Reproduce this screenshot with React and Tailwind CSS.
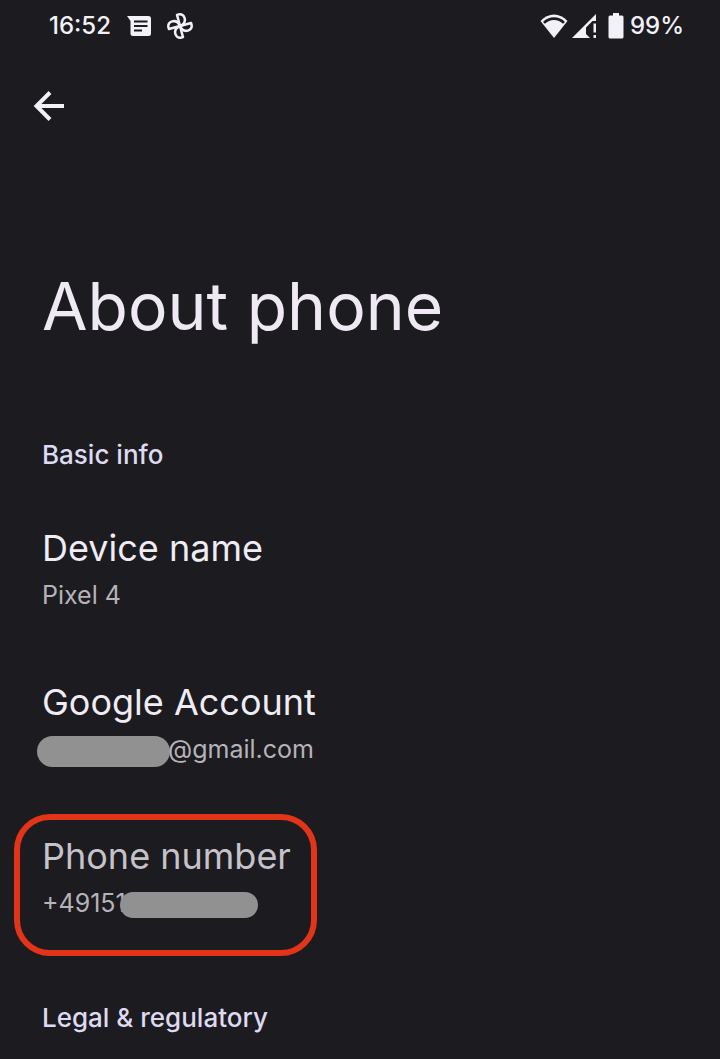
import React from "react";

function MessageIcon() {
  return (
    <svg width="24" height="20" viewBox="0 0 24 20" aria-hidden="true">
      <path d="M0 0H21.500Q24 0 24 2.500V17.500Q24 20 21.500 20H6Q3.500 20 3.500 17.500V5Z" fill="#f3f1f8" />
      <path d="M7 5.500H20.500M7 10H20.500M7 14.500H15" stroke="#1c1b20" strokeWidth="2" />
    </svg>
  );
}

function PinwheelIcon() {
  const blade = "M13 13V1.500H14.500C18 1.500 19.500 4 19.500 6.500C19.500 10 17 12.500 13 13Z";
  return (
    <svg width="26" height="26" viewBox="0 0 26 26" fill="none" aria-hidden="true">
      <g stroke="#f3f1f8" strokeWidth="2.500" strokeLinejoin="round">
        {[-15, 75, 165, 255].map((angle) => (
          <path key={angle} d={blade} transform={`rotate(${angle} 13 13)`} />
        ))}
      </g>
    </svg>
  );
}

function WifiIcon() {
  return (
    <svg width="28" height="24" viewBox="0 0 28 24" aria-hidden="true">
      <path d="M0.500 7C8-1.800 20-1.800 27.500 7L14 24Z" fill="#f3f1f8" />
      <path d="M4 8.800C9.500 3.200 18.500 3.200 24 8.800" stroke="#1c1b20" strokeWidth="2.600" fill="none" />
    </svg>
  );
}

function SignalIcon() {
  return (
    <svg width="24" height="24" viewBox="0 0 24 24" aria-hidden="true">
      <path d="M0 24L24 0V7H20.500L14 13.500V20L18 24Z" fill="#f3f1f8" />
      <path d="M21.500 9.500H24V18.500H21.500ZM21.500 21H24V24H21.500Z" fill="#f3f1f8" />
    </svg>
  );
}

function BatteryIcon() {
  return (
    <svg width="16" height="26" viewBox="0 0 16 26" aria-hidden="true">
      <path d="M5 0H11V2.500H14Q15.500 2.500 15.500 4V24Q15.500 25.500 14 25.500H2Q0.500 25.500 0.500 24V4Q0.500 2.500 2 2.500H5Z" fill="#f3f1f8" />
    </svg>
  );
}

function StatusBar() {
  return (
    <div className="flex h-[52px] items-center justify-between pl-[49px] pr-9 text-2xl font-medium text-[#f3f1f8]">
      <div className="flex items-center gap-4">
        <span>16:52</span>
        <MessageIcon />
        <PinwheelIcon />
      </div>
      <div className="flex items-center">
        <div className="mr-3 flex gap-1">
          <WifiIcon />
          <SignalIcon />
        </div>
        <BatteryIcon />
        <span className="ml-1.5">99%</span>
      </div>
    </div>
  );
}

function SectionTitle({ children }) {
  return <h2 className="text-[26px] font-medium leading-10 text-[#dedaf0]">{children}</h2>;
}

function InfoRow({ title, children, highlighted = false }) {
  return (
    <li className="pb-[27px] pt-[31px]">
      <div className="relative w-fit">
        <h3 className={highlighted ? "text-4xl/12 text-[#c5c2ca]" : "text-4xl/12 text-[#efecf4]"}>
          {title}
        </h3>
        <p className="flex h-12 items-center text-[25px] text-[#b5b3b9]">{children}</p>
        {highlighted && (
          <div className="absolute -bottom-7 -left-7 -right-[26px] -top-[18px] rounded-[36px] border-6 border-[#e23418]" />
        )}
      </div>
    </li>
  );
}

export default function App() {
  return (
    <div className="min-h-screen bg-[#1c1b20] font-['Inter',sans-serif]">
      <StatusBar />
      <header className="pt-[30px]">
        <button type="button" aria-label="Back" className="ml-[25px] flex size-12 items-center justify-center">
          <svg width="32" height="30" viewBox="0 0 32 30" fill="none" stroke="#f3f1f8" strokeWidth="4" aria-hidden="true">
            <path d="M31 15H4M17 1.500L3.500 15L17 28.500" />
          </svg>
        </button>
        <h1 className="mt-[136px] px-[42px] text-[66px] leading-20 text-[#efe9f4]">About phone</h1>
      </header>
      <main className="px-[42px] pt-[46px]">
        <section className="pt-[43px]">
          <SectionTitle>Basic info</SectionTitle>
          <ul className="pt-[18px]">
            <InfoRow title="Device name">Pixel 4</InfoRow>
            <InfoRow title="Google Account">
              <span className="-ml-[5px] mt-0.5 h-[31px] w-[133px] rounded-full bg-[#919191]" />
              <span className="-ml-[2px]">@gmail.com</span>
            </InfoRow>
            <InfoRow title="Phone number" highlighted>
              <span>+49151</span>
              <span className="z-10 -ml-1.5 mt-0.5 h-[26px] w-[138px] rounded-full bg-[#919191]" />
            </InfoRow>
          </ul>
        </section>
        <section className="pt-[43px]">
          <SectionTitle>Legal &amp; regulatory</SectionTitle>
        </section>
      </main>
    </div>
  );
}
